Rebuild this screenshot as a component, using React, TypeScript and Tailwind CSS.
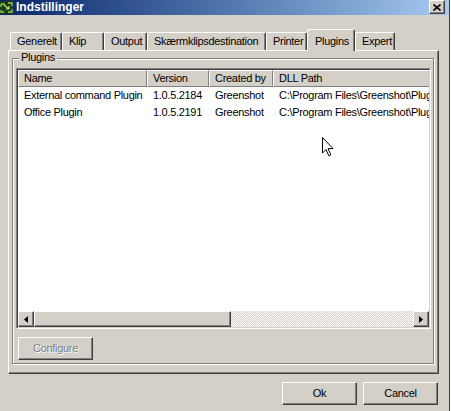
import * as React from "react";

const tabs = [
  { label: "Generelt", w: "w-[52px]" },
  { label: "Klip", w: "w-[42px]" },
  { label: "Output", w: "w-[43px]" },
  { label: "Skærmklipsdestination", w: "w-[119px]" },
  { label: "Printer", w: "w-[41px]" },
  { label: "Plugins", w: "w-[48px]", active: true },
  { label: "Expert", w: "w-[40px]" },
];

const columns = [
  { label: "Name", w: "w-[129px]" },
  { label: "Version", w: "w-[62px]" },
  { label: "Created by", w: "w-[64px]" },
  { label: "DLL Path", w: "w-[200px]" },
];

const plugins = [
  ["External command Plugin", "1.0.5.2184", "Greenshot", "C:\\Program Files\\Greenshot\\Plugins\\ExternalCommand"],
  ["Office Plugin", "1.0.5.2191", "Greenshot", "C:\\Program Files\\Greenshot\\Plugins\\Office"],
];

// classic 3d raised edge used by buttons, tabs, headers
const raised =
  "border border-t-white border-l-white border-r-[#404040] border-b-[#404040] shadow-[inset_-1px_-1px_0_#808080]";

function ScrollButton({ dir }: { dir: "left" | "right" }) {
  return (
    <div className={`w-[16px] h-full bg-[#d4d0c8] flex items-center justify-center ${raised}`}>
      <svg width="4" height="7" viewBox="0 0 4 7">
        {dir === "left" ? <path d="M4 0 L0 3.5 L4 7 Z" fill="#000" /> : <path d="M0 0 L4 3.5 L0 7 Z" fill="#000" />}
      </svg>
    </div>
  );
}

function PushButton({ children, disabled }: { children: React.ReactNode; disabled?: boolean }) {
  return (
    <div
      className={`w-[75px] h-[23px] bg-[#d4d0c8] flex items-center justify-center ${raised} ${
        disabled ? "text-[#808080] [text-shadow:1px_1px_0_#fff]" : "text-black"
      }`}
    >
      {children}
    </div>
  );
}

export default function App() {
  return (
    <div className="w-[451px] h-[411px] bg-white overflow-hidden text-[11px] tracking-[-0.3px] text-black font-['Liberation_Sans',Arial,sans-serif]">
      <div className="relative w-[450px] h-full bg-[#d4d0c8] border-r border-[#404040] flex flex-col">
        {/* Title bar */}
        <div className="h-[15px] flex items-start bg-gradient-to-r from-[#0a246a] to-[#a6caf0]">
          <svg width="14" height="13" viewBox="0 0 14 13" className="mt-[1px]">
            <rect x="0" y="0" width="14" height="13" fill="#1d3a1a" />
            <path d="M1 3 H5 M1 3 V6 M1 9 V11 H4 M8 2 H12 V5 M12 8 V11 H8" stroke="#8fd13a" strokeWidth="1.3" fill="none" />
            <path d="M4 4 L9 8 M9 8 L9 5 M9 8 L6 8" stroke="#b8e86a" strokeWidth="1.2" fill="none" />
          </svg>
          <span className="ml-[2px] text-white font-bold text-[12px] tracking-normal leading-[15px]">Indstillinger</span>
          <div className={`ml-auto mr-[4px] w-[16px] h-[14px] bg-[#d4d0c8] flex items-center justify-center ${raised}`}>
            <svg width="8" height="7" viewBox="0 0 8 7">
              <path d="M0.5 0.5 L7.5 6.5 M7.5 0.5 L0.5 6.5" stroke="#000" strokeWidth="1.6" />
            </svg>
          </div>
        </div>

        {/* Tab strip */}
        <div className="relative z-10 mt-[14px] -mb-px h-[22px] pl-[10px] flex items-end">
          {tabs.map((t) =>
            t.active ? (
              <div
                key={t.label}
                className={`${t.w} h-[22px] pl-[7px] pt-[3px] bg-[#d4d0c8] border-t border-l border-r border-t-white border-l-white border-r-[#404040] shadow-[inset_-1px_0_0_#808080] rounded-t-[2px]`}
              >
                {t.label}
              </div>
            ) : (
              <div
                key={t.label}
                className={`${t.w} h-[18px] mb-px pl-[6px] flex items-center bg-[#d4d0c8] border-t border-l border-r border-t-white border-l-white border-r-[#404040] shadow-[inset_-1px_0_0_#808080] rounded-t-[2px]`}
              >
                {t.label}
              </div>
            )
          )}
        </div>

        {/* Tab page */}
        <div className="ml-[8px] w-[431px] h-[324px] border border-t-white border-l-white border-r-[#404040] border-b-[#404040] shadow-[inset_-1px_-1px_0_#808080]">
          {/* Group box */}
          <div className="relative ml-[3px] mt-[7px] w-[422px] h-[306px] border border-[#808080] shadow-[inset_1px_1px_0_#fff,1px_1px_0_#fff]">
            <span className="absolute left-[6px] -top-[8px] px-[2px] bg-[#d4d0c8] leading-[13px]">Plugins</span>

            {/* List view */}
            <div className="ml-[3px] mt-[9px] w-[415px] h-[261px] border border-t-[#808080] border-l-[#808080] border-r-white border-b-white">
              <div className="w-full h-full border border-t-[#404040] border-l-[#404040] border-r-[#d4d0c8] border-b-[#d4d0c8] bg-white flex flex-col overflow-hidden">
                <div className="h-[17px] flex shrink-0">
                  {columns.map((c) => (
                    <div
                      key={c.label}
                      className={`${c.w} shrink-0 h-full pl-[5px] flex items-center bg-[#d4d0c8] border border-t-white border-l-white border-r-[#808080] border-b-[#808080] shadow-[1px_0_0_#404040]`}
                    >
                      {c.label}
                    </div>
                  ))}
                </div>
                {plugins.map((row) => (
                  <div key={row[0]} className="h-[17px] flex items-center whitespace-nowrap shrink-0">
                    {row.map((cell, i) => (
                      <div key={i} className={`${columns[i].w} shrink-0 pl-[6px] overflow-hidden`}>
                        {cell}
                      </div>
                    ))}
                  </div>
                ))}
                <div className="flex-1" />

                {/* Horizontal scroll bar */}
                <div className="h-[16px] flex shrink-0">
                  <ScrollButton dir="left" />
                  <div className={`w-[197px] h-full bg-[#d4d0c8] ${raised}`} />
                  <div className="flex-1 h-full bg-[repeating-conic-gradient(#d4d0c8_0%_25%,#ffffff_0%_50%)] bg-[length:2px_2px]" />
                  <ScrollButton dir="right" />
                </div>
              </div>
            </div>

            <div className="ml-[5px] mt-[8px]">
              <PushButton disabled>Configure</PushButton>
            </div>
          </div>
        </div>

        {/* Dialog buttons */}
        <div className="mt-[8px] pr-[11px] flex justify-end gap-[6px]">
          <PushButton>Ok</PushButton>
          <PushButton>Cancel</PushButton>
        </div>

        {/* Mouse pointer */}
        <svg width="12" height="20" viewBox="0 0 12 20" className="absolute left-[322px] top-[137px]">
          <path
            d="M0.5 0.5 V16 L4 12.5 L6.8 18.8 L8.8 17.9 L6.1 11.6 L11 11.6 Z"
            fill="#fff"
            stroke="#000"
            strokeWidth="1"
            strokeLinejoin="miter"
          />
        </svg>
      </div>
    </div>
  );
}
